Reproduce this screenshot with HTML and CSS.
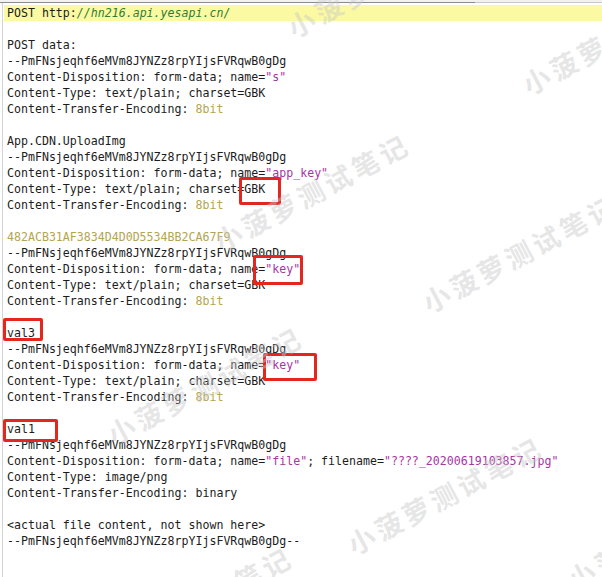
FILE: index.html
```html
<!DOCTYPE html>
<html>
<head>
	<meta charset="utf-8">
	<title>POST data</title>
	<link rel="stylesheet" href="styles.css">
</head>
<body>
	<div class="page">
		<div class="tabbar"><span class="tab"></span><span class="rest"></span></div>
		<div class="editor">
			<div class="ln hl">POST http:<span class="url">//hn216.api.yesapi.cn/</span></div>
			<div class="ln"></div>
			<div class="ln">POST data:</div>
			<div class="ln">--PmFNsjeqhf6eMVm8JYNZz8rpYIjsFVRqwB0gDg</div>
			<div class="ln">Content-Disposition: form-data; name=<span class="str">"s"</span></div>
			<div class="ln">Content-Type: text/plain; charset=GBK</div>
			<div class="ln">Content-Transfer-Encoding: <span class="num">8bit</span></div>
			<div class="ln"></div>
			<div class="ln">App.CDN.UploadImg</div>
			<div class="ln">--PmFNsjeqhf6eMVm8JYNZz8rpYIjsFVRqwB0gDg</div>
			<div class="ln">Content-Disposition: form-data; name=<span class="str">"app_key"</span></div>
			<div class="ln">Content-Type: text/plain; charset=GBK</div>
			<div class="ln">Content-Transfer-Encoding: <span class="num">8bit</span></div>
			<div class="ln"></div>
			<div class="ln num">482ACB31AF3834D4D0D5534BB2CA67F9</div>
			<div class="ln">--PmFNsjeqhf6eMVm8JYNZz8rpYIjsFVRqwB0gDg</div>
			<div class="ln">Content-Disposition: form-data; name=<span class="str">"key"</span></div>
			<div class="ln">Content-Type: text/plain; charset=GBK</div>
			<div class="ln">Content-Transfer-Encoding: <span class="num">8bit</span></div>
			<div class="ln"></div>
			<div class="ln">val3</div>
			<div class="ln">--PmFNsjeqhf6eMVm8JYNZz8rpYIjsFVRqwB0gDg</div>
			<div class="ln">Content-Disposition: form-data; name=<span class="str">"key"</span></div>
			<div class="ln">Content-Type: text/plain; charset=GBK</div>
			<div class="ln">Content-Transfer-Encoding: <span class="num">8bit</span></div>
			<div class="ln"></div>
			<div class="ln">val1</div>
			<div class="ln">--PmFNsjeqhf6eMVm8JYNZz8rpYIjsFVRqwB0gDg</div>
			<div class="ln">Content-Disposition: form-data; name=<span class="str">"file"</span>; filename=<span class="str">"????_20200619103857.jpg"</span></div>
			<div class="ln">Content-Type: image/png</div>
			<div class="ln">Content-Transfer-Encoding: binary</div>
			<div class="ln"></div>
			<div class="ln">&lt;actual file content, not shown here&gt;</div>
			<div class="ln">--PmFNsjeqhf6eMVm8JYNZz8rpYIjsFVRqwB0gDg--</div>
		</div>

		<!-- red annotation boxes -->
		<div class="mark m1"></div>
		<div class="mark m2"></div>
		<div class="mark m3"></div>
		<div class="mark m4"></div>
		<div class="mark m5"></div>

		<!-- watermark -->
		<div class="wm w1">小菠萝测试笔记</div>
		<div class="wm w2">小菠萝测试笔记</div>
		<div class="wm w3">小菠萝测试笔记</div>
		<div class="wm w4">小菠萝测试笔记</div>
		<div class="wm w5">小菠萝测试笔记</div>
		<div class="wm w6">小菠萝测试笔记</div>
		<div class="wm w7">小菠萝测试笔记</div>
		<div class="wm w8">小菠萝测试笔记</div>
	</div>
</body>
</html>
```

FILE: styles.css
```css
body{
	margin: 0;
	background-color: #fff;
}
.page{
	position: relative;
	width: 602px;
	height: 577px;
	overflow: hidden;
}
.tabbar{
	display: flex;
	height: 3px;
}
.tab{
	width: 475px;
	background-color: #f2f2f2;
	border-bottom: 1px solid #8c8c8c;
	box-sizing: border-box;
}
.rest{
	flex: 1;
	background-color: #f2f2f2;
	border-bottom: 1px solid #c8c8c8;
	box-sizing: border-box;
}
.editor{
	margin-left: 2px;
	height: 574px;
	padding-top: 2px;
	box-sizing: border-box;
	border-left: 1px solid #d4d4d4;
	font-family: "DejaVu Sans Mono", "Liberation Mono", monospace;
	font-size: 11.6px;
	color: #1c1c1c;
}
.ln{
	height: 16px;
	line-height: 16px;
	padding-left: 4px;
	white-space: pre;
}
.hl{
	margin-left: 1px;
	padding-left: 3px;
	background-color: #fbfaa3;
}
.url{
	color: #2f7d2f;
	font-style: italic;
}
.str{
	color: #a8349f;
}
.num{
	color: #b3a552;
}
.mark{
	position: absolute;
	border: 3px solid #e3271f;
	border-radius: 2px;
	box-sizing: border-box;
}
.m1{ left: 239px; top: 177px; width: 42px; height: 28px; }
.m2{ left: 253px; top: 255px; width: 50px; height: 30px; }
.m3{ left: 3px; top: 318px; width: 40px; height: 23px; }
.m4{ left: 263px; top: 353px; width: 54px; height: 28px; }
.m5{ left: 3px; top: 419px; width: 55px; height: 23px; }
.wm{
	position: absolute;
	transform: translate(-50%, -50%) rotate(-28deg);
	font-family: "Noto Sans CJK SC", sans-serif;
	font-weight: bold;
	font-size: 27px;
	letter-spacing: 4px;
	white-space: nowrap;
	color: rgba(200, 200, 200, 0.45);
	pointer-events: none;
}
.w1{ left: 385px; top: -22px; }
.w2{ left: 620px; top: 35px; }
.w3{ left: 312px; top: 192px; }
.w4{ left: 520px; top: 253px; }
.w5{ left: 205px; top: 385px; }
.w6{ left: 445px; top: 495px; }
.w7{ left: 195px; top: 605px; }
.w8{ left: 665px; top: 530px; }
```
